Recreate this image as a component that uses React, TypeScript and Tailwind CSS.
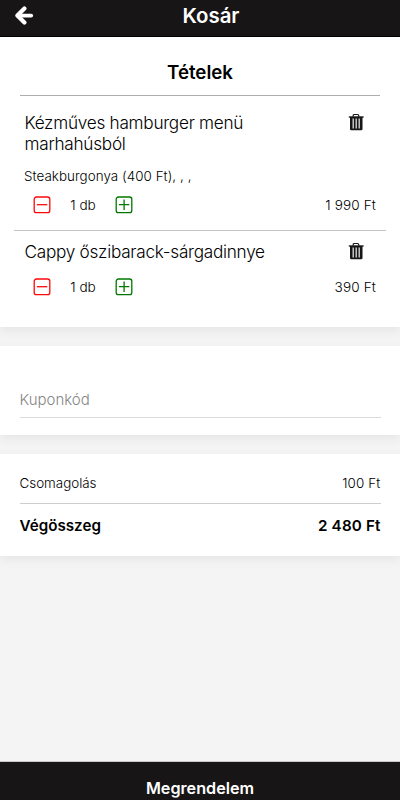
import React from "react";

function BackArrow() {
  return (
    <svg className="h-[20px] w-[20px]" viewBox="0 0 20 20" fill="none" stroke="#fff">
      <path d="M10.4 2.6 3.4 9.6l7 7" strokeWidth="4.2" strokeLinecap="round" strokeLinejoin="round" />
      <path d="M4 9.6h13.2" strokeWidth="3.8" strokeLinecap="round" />
    </svg>
  );
}

function Trash() {
  return (
    <svg className="h-[18px] w-[16px]" viewBox="0 0 16 18" fill="none">
      <path d="M5.2 3.8V2.6q0-1.1 1.2-1.1h3.1q1.2 0 1.2 1.1v1.2" stroke="#171717" strokeWidth="1.2" />
      <path d="M.8 4h14.8" stroke="#171717" strokeWidth="1.4" />
      <path d="M2 4h12.5v12.1q0 1.2-1.2 1.2H3.2q-1.2 0-1.2-1.2Z" fill="#171717" />
      <path d="M5.2 5.6v9.9M8.2 5.6v9.9M11.2 5.6v9.9" stroke="#dedede" strokeWidth="1.3" />
    </svg>
  );
}

function StepIcon({ plus = false }: { plus?: boolean }) {
  return (
    <svg className="h-[18px] w-[18px]" viewBox="0 0 18 18" fill="none" stroke={plus ? "#007800" : "#ff0808"} strokeWidth="1.3">
      <rect x="1.2" y="1" width="15.6" height="15.6" rx="2.2" />
      <path d={plus ? "M3.9 8.7h10.4M9.1 3.5v10.4" : "M3.9 8.7h10.4"} />
    </svg>
  );
}

function Quantity({ price }: { price: string }) {
  return (
    <div className="flex h-[20px] items-center pl-[33px] pr-[24px] text-[13.6px] font-light">
      <button aria-label="Kevesebb"><StepIcon /></button>
      <span className="w-[64px] pt-px text-center">1 db</span>
      <button aria-label="Több"><StepIcon plus /></button>
      <span className="ml-auto pt-px tracking-[0.12px]">{price}</span>
    </div>
  );
}

export default function App() {
  return (
    <div className="flex h-[800px] w-full flex-col overflow-hidden bg-[#f4f4f4] font-['Inter','Liberation_Sans',sans-serif] text-black">
      <header className="grid h-[37px] shrink-0 grid-cols-[60px_1fr_38px] border-b border-black bg-[#171516] text-white">
        <button className="flex pl-[14px] pt-[6px]" aria-label="Vissza"><BackArrow /></button>
        <h1 className="text-center text-[20.4px] font-semibold leading-[31px]">Kosár</h1>
      </header>

      <section className="h-[290px] shrink-0 bg-white shadow-[0_4px_10px_rgba(0,0,0,0.06)]">
        <h2 className="mx-[20px] h-[59px] border-b border-[#adadad] pt-[23px] text-center text-[18.7px] font-semibold leading-[25px]">Tételek</h2>
        <article>
          <div className="flex h-[71px] justify-between pl-[24.5px] pr-[36px] pt-[17px]">
            <h3 className="w-[250px] text-[17.2px] font-light leading-[20.5px] tracking-[-0.27px]">Kézműves hamburger menü marhahúsból</h3>
            <button className="flex h-[18px]" aria-label="Törlés"><Trash /></button>
          </div>
          <p className="h-[28px] pl-[24px] text-[13.4px] font-light leading-[19px] tracking-[0.05px]">Steakburgonya (400 Ft), , ,</p>
          <Quantity price="1 990 Ft" />
        </article>
        <hr className="mx-[14px] mt-[15px] border-[#c4c4c4]" />
        <article>
          <div className="flex h-[46px] justify-between pl-[24.5px] pr-[36px] pt-[11px]">
            <h3 className="text-[17.2px] font-light leading-[20px] tracking-[-0.27px]">Cappy őszibarack-sárgadinnye</h3>
            <button className="flex h-[18px]" aria-label="Törlés"><Trash /></button>
          </div>
          <Quantity price="390 Ft" />
        </article>
      </section>

      <section className="mt-[19px] h-[89px] shrink-0 bg-white px-[19.5px] pt-[36px] shadow-[0_4px_10px_rgba(0,0,0,0.06)]">
        <input className="block h-[36px] w-full border-b border-[#dadada] text-[15px] font-light outline-none placeholder:text-[#858585]" placeholder="Kuponkód" />
      </section>

      <section className="mt-[19px] h-[102px] shrink-0 bg-white px-[19.5px] pt-[20px] shadow-[0_4px_10px_rgba(0,0,0,0.06)]">
        <div className="flex h-[30px] justify-between border-b border-[#cbcfcf] text-[13.4px] font-light leading-[19px]">
          <span>Csomagolás</span><span className="tracking-[0.15px]">100 Ft</span>
        </div>
        <div className="flex justify-between pt-[11px] text-[15.2px] font-semibold leading-[21px]">
          <span>Végösszeg</span><span className="tracking-[0.15px]">2 480 Ft</span>
        </div>
      </section>

      <button className="mt-auto h-[39px] shrink-0 border-t border-[#c9c9c9] bg-[#171516] pt-[15px] text-[16.2px] font-semibold leading-[23px] text-white">Megrendelem</button>
    </div>
  );
}
